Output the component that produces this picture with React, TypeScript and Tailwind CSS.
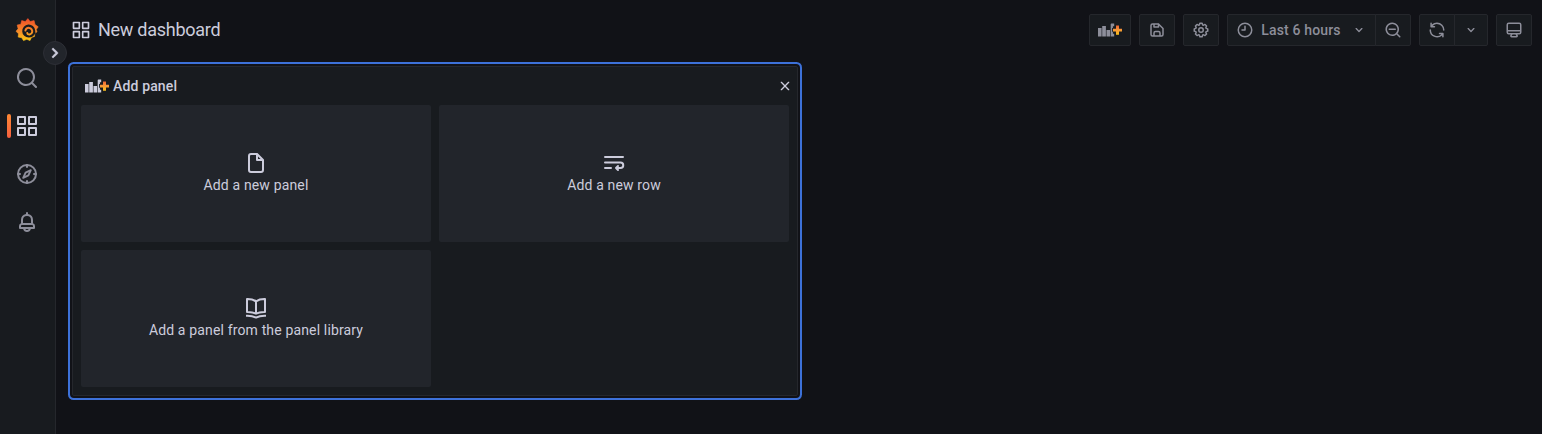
import type { ReactNode } from 'react';

const paths = {
  apps: 'M10,13H3a1,1,0,0,0-1,1v7a1,1,0,0,0,1,1h7a1,1,0,0,0,1-1V14A1,1,0,0,0,10,13ZM9,20H4V15H9ZM21,2H14a1,1,0,0,0-1,1v7a1,1,0,0,0,1,1h7a1,1,0,0,0,1-1V3A1,1,0,0,0,21,2ZM20,9H15V4h5Zm1,4H14a1,1,0,0,0-1,1v7a1,1,0,0,0,1,1h7a1,1,0,0,0,1-1V14A1,1,0,0,0,21,13Zm-1,7H15V15h5ZM10,2H3A1,1,0,0,0,2,3v7a1,1,0,0,0,1,1h7a1,1,0,0,0,1-1V3A1,1,0,0,0,10,2ZM9,9H4V4H9Z',
  search: 'M21.71,20.29,18,16.61A9,9,0,1,0,16.61,18l3.68,3.68a1,1,0,0,0,1.42,0A1,1,0,0,0,21.71,20.29ZM11,18a7,7,0,1,1,7-7A7,7,0,0,1,11,18Z',
  searchMinus: 'M21.71,20.29,18,16.61A9,9,0,1,0,16.61,18l3.68,3.68a1,1,0,0,0,1.42,0A1,1,0,0,0,21.71,20.29ZM11,18a7,7,0,1,1,7-7A7,7,0,0,1,11,18ZM15,10H7a1,1,0,0,0,0,2h8a1,1,0,0,0,0-2Z',
  bell: 'M18,13.18V10a6,6,0,0,0-5-5.91V3a1,1,0,0,0-2,0V4.09A6,6,0,0,0,6,10v3.18A3,3,0,0,0,4,16v2a1,1,0,0,0,1,1H8.14a4,4,0,0,0,7.72,0H19a1,1,0,0,0,1-1V16A3,3,0,0,0,18,13.18ZM8,10a4,4,0,0,1,8,0v3H8Zm4,10a2,2,0,0,1-1.72-1h3.44A2,2,0,0,1,12,20Zm6-3H6V16a1,1,0,0,1,1-1H17a1,1,0,0,1,1,1Z',
  save: 'M20.71,9.29l-6-6a1,1,0,0,0-.32-.21A1.09,1.09,0,0,0,14,3H6A3,3,0,0,0,3,6V18a3,3,0,0,0,3,3H18a3,3,0,0,0,3-3V10A1,1,0,0,0,20.71,9.29ZM9,5h4V7H9Zm6,14H9V16a1,1,0,0,1,1-1h4a1,1,0,0,1,1,1Zm4-1a1,1,0,0,1-1,1H17V16a3,3,0,0,0-3-3H10a3,3,0,0,0-3,3v3H6a1,1,0,0,1-1-1V6A1,1,0,0,1,6,5H7V8A1,1,0,0,0,8,9h6a1,1,0,0,0,1-1V6.41l4,4Z',
  cog: 'M21.32,9.55l-1.89-.63.89-1.78A1,1,0,0,0,20.13,6L18,3.87a1,1,0,0,0-1.15-.19l-1.78.89-.63-1.89A1,1,0,0,0,13.5,2h-3a1,1,0,0,0-.95.68L8.92,4.57,7.14,3.68A1,1,0,0,0,6,3.87L3.87,6a1,1,0,0,0-.19,1.15l.89,1.78-1.89.63A1,1,0,0,0,2,10.5v3a1,1,0,0,0,.68.95l1.89.63-.89,1.78A1,1,0,0,0,3.87,18L6,20.13a1,1,0,0,0,1.15.19l1.78-.89.63,1.89a1,1,0,0,0,.95.68h3a1,1,0,0,0,.95-.68l.63-1.89,1.78.89A1,1,0,0,0,18,20.13L20.13,18a1,1,0,0,0,.19-1.15l-.89-1.78,1.89-.63A1,1,0,0,0,22,13.5v-3A1,1,0,0,0,21.32,9.55ZM20,12.78l-1.2.4A2,2,0,0,0,17.64,16l.57,1.14-1.1,1.1L16,17.64a2,2,0,0,0-2.79,1.16l-.4,1.2H11.22l-.4-1.2A2,2,0,0,0,8,17.64l-1.14.57-1.1-1.1L6.36,16A2,2,0,0,0,5.2,13.18L4,12.78V11.22l1.2-.4A2,2,0,0,0,6.36,8L5.79,6.89l1.1-1.1L8,6.36A2,2,0,0,0,10.82,5.2l.4-1.2h1.56l.4,1.2A2,2,0,0,0,16,6.36l1.14-.57,1.1,1.1L17.64,8a2,2,0,0,0,1.16,2.79l1.2.4ZM12,8a4,4,0,1,0,4,4A4,4,0,0,0,12,8Zm0,6a2,2,0,1,1,2-2A2,2,0,0,1,12,14Z',
  clock: 'M12,6a1,1,0,0,0-1,1v4H8a1,1,0,0,0,0,2h4a1,1,0,0,0,1-1V7A1,1,0,0,0,12,6Zm0-4A10,10,0,1,0,22,12,10,10,0,0,0,12,2Zm0,18a8,8,0,1,1,8-8A8,8,0,0,1,12,20Z',
  angleDown: 'M17,9.17a1,1,0,0,0-1.41,0L12,12.71,8.46,9.17a1,1,0,0,0-1.41,0,1,1,0,0,0,0,1.42l4.24,4.24a1,1,0,0,0,1.42,0L17,10.59A1,1,0,0,0,17,9.17Z',
  sync: 'M19.91,15.51H15.38a1,1,0,0,0,0,2h2.4A8,8,0,0,1,4,12a1,1,0,0,0-2,0,10,10,0,0,0,16.88,7.23V21a1,1,0,0,0,2,0V16.5A1,1,0,0,0,19.91,15.51ZM12,2A10,10,0,0,0,5.12,4.77V3a1,1,0,0,0-2,0V7.5a1,1,0,0,0,1,1h4.5a1,1,0,0,0,0-2H6.22A8,8,0,0,1,20,12a1,1,0,0,0,2,0A10,10,0,0,0,12,2Z',
  monitor: 'M19,2H5A3,3,0,0,0,2,5V15a3,3,0,0,0,3,3H7.64l-.58,1a2,2,0,0,0,0,2,2,2,0,0,0,1.75,1h6.46A2,2,0,0,0,17,21a2,2,0,0,0,0-2l-.59-1H19a3,3,0,0,0,3-3V5A3,3,0,0,0,19,2ZM8.77,20,10,18H14l1.2,2ZM20,15a1,1,0,0,1-1,1H5a1,1,0,0,1-1-1V14H20Zm0-3H4V5A1,1,0,0,1,5,4H19a1,1,0,0,1,1,1Z',
  file: 'M20,8.94a1.31,1.31,0,0,0-.06-.27l0-.09a1.07,1.07,0,0,0-.19-.28h0l-6-6h0a1.07,1.07,0,0,0-.28-.19.32.32,0,0,0-.09,0A.88.88,0,0,0,13.05,2H7A3,3,0,0,0,4,5V19a3,3,0,0,0,3,3H17a3,3,0,0,0,3-3V9S20,9,20,8.94ZM14,5.41,16.59,8H14ZM18,19a1,1,0,0,1-1,1H7a1,1,0,0,1-1-1V5A1,1,0,0,1,7,4h5V9a1,1,0,0,0,1,1h5Z',
};

function Icon({ name, className }: { name: keyof typeof paths; className: string }) {
  return (
    <svg viewBox="0 0 24 24" fill="currentColor" className={`shrink-0 ${className}`}>
      <path d={paths[name]} />
    </svg>
  );
}

function LineIcon({ className, children }: { className: string; children: ReactNode }) {
  return (
    <svg
      viewBox="0 0 24 24"
      fill="none"
      stroke="currentColor"
      strokeWidth="2"
      strokeLinecap="round"
      strokeLinejoin="round"
      className={`shrink-0 ${className}`}
    >
      {children}
    </svg>
  );
}

function GrafanaLogo() {
  return (
    <svg viewBox="0 0 24 24" className="size-6 shrink-0">
      <defs>
        <linearGradient id="brand" gradientUnits="userSpaceOnUse" x1="12" y1="24" x2="12" y2="1">
          <stop offset="0" stopColor="#fcd00f" />
          <stop offset="0.45" stopColor="#f68c28" />
          <stop offset="1" stopColor="#ef4e2a" />
        </linearGradient>
      </defs>
      <path
        fill="url(#brand)"
        stroke="url(#brand)"
        strokeWidth="0.6"
        strokeLinejoin="round"
        d="M12.900.6l2.200 2.900 4-.9.900 4 3.200 2.200-1.900 2.700.7 2.400-2.200 1.200-.3 3.400-3 .9-1.500 3.200-3.200-1.300-3.300 1.300-1.800-2.900-3.500-.6.300-3.400L1 13.300l2.100-2.600L2.200 7l3.600-.7.900-3.700 3.600 1z"
      />
      <path fill="#181b1f" d="M20.200 12.400a6.500 6.500 0 1 0-6.400 7.200c3 0 5.200-1.600 6.600-4.600z" />
      <path
        fill="none"
        stroke="url(#brand)"
        strokeWidth="2"
        strokeLinecap="round"
        d="M10.400 12.600c.3-1.900 2-3 3.800-2.700 2 .3 3.400 2.200 3 4.100-.3 1.400-1.300 2.300-2.600 2.600M14.600 16.500c-1.200.2-2.200-.4-2.300-1.500"
      />
    </svg>
  );
}

function PanelAddIcon({ id }: { id: string }) {
  return (
    <svg viewBox="0 0 24 14" className="h-3.5 w-6 shrink-0">
      <defs>
        <linearGradient id={id} x1="0" y1="1" x2="0" y2="0">
          <stop offset="0" stopColor="#fbc01a" />
          <stop offset="0.6" stopColor="#f7923a" />
          <stop offset="1" stopColor="#f0632f" />
        </linearGradient>
      </defs>
      <path
        fill="currentColor"
        d="M0 5h3.600v8.500H0zM4.200 3h3.700v10.500H4.200zM8.500 7h3.600v6.500H8.500zM12.700 1.300q0-.7.7-.7h2.800v2.600h-1.300v1.900h-.8v3.600h.8v2.100h1.300v2.700h-3.500z"
      />
      <path fill={`url(#${id})`} d="M18 2.600h3v3.100h3v2.900h-3v3.200h-3V8.600h-3V5.700h3z" />
    </svg>
  );
}

function Sidebar() {
  return (
    <nav className="relative flex w-14 shrink-0 flex-col border-r border-[#25272c] bg-[#181b1f] text-[#8d8e9a]">
      <div className="flex h-[54px] items-center pt-1.5 pl-[15px]">
        <GrafanaLogo />
      </div>
      <div className="flex h-12 items-center pl-[15px]">
        <Icon name="search" className="size-6" />
      </div>
      <div className="flex h-12 items-center gap-1 pl-[7px] text-[#ccccdc]">
        <span className="h-6 w-1 rounded-[2px] bg-linear-to-b from-[#ff8833] to-[#f55f3e]" />
        <Icon name="apps" className="size-6" />
      </div>
      <div className="flex h-12 items-center pl-[15px]">
        <LineIcon className="size-6">
          <circle cx="12" cy="12" r="9" />
          <path d="M12 3v2M12 19v2M3 12h2M19 12h2" />
          <path d="M15.8 8.200 13.400 13.400 8.200 15.800 10.600 10.600z" strokeWidth="1.9" />
        </LineIcon>
      </div>
      <div className="flex h-12 items-center pl-[15px]">
        <Icon name="bell" className="size-6" />
      </div>
      <button className="absolute top-[41px] left-[43px] flex size-6 items-center justify-center rounded-full border border-[#2d2f36] bg-[#22252b] text-[#ccccdc]">
        <Icon name="angleDown" className="size-[22px] -rotate-90 stroke-current stroke-[0.6]" />
      </button>
    </nav>
  );
}

const button = 'flex h-8 items-center justify-center border border-[#25272c] bg-[#181b1f]';

function Toolbar() {
  return (
    <header className="flex h-[60px] items-center pr-[10px] pl-[15px] text-[#8d8e9a]">
      <Icon name="apps" className="size-5 text-[#ccccdc]" />
      <h1 className="ml-[7px] flex-1 pb-0.5 text-[18px] tracking-[-0.26px] text-[#ccccdc]">New dashboard</h1>
      <div className="flex gap-2">
        <button className={`${button} w-[42px] rounded-[2px]`}>
          <PanelAddIcon id="plus-toolbar" />
        </button>
        <button className={`${button} w-9 rounded-[2px]`}>
          <Icon name="save" className="size-[18px]" />
        </button>
        <button className={`${button} w-9 rounded-[2px]`}>
          <Icon name="cog" className="size-[18px]" />
        </button>
        <div className="flex">
          <button className={`${button} w-[149px] rounded-l-[2px] text-sm font-medium tracking-[0.15px]`}>
            <Icon name="clock" className="size-[18px]" />
            <span className="ml-[7px]">Last 6 hours</span>
            <Icon name="angleDown" className="ml-2.5 size-4" />
          </button>
          <button className={`${button} -ml-px w-9 rounded-r-[2px]`}>
            <Icon name="searchMinus" className="size-[18px]" />
          </button>
        </div>
        <div className="flex">
          <button className={`${button} w-9 rounded-l-[2px]`}>
            <Icon name="sync" className="size-[18px]" />
          </button>
          <button className={`${button} -ml-px w-[34px] rounded-r-[2px]`}>
            <Icon name="angleDown" className="size-4" />
          </button>
        </div>
        <button className={`${button} w-9 rounded-[2px]`}>
          <Icon name="monitor" className="size-[18px]" />
        </button>
      </div>
    </header>
  );
}

function Card({ icon, label }: { icon: ReactNode; label: string }) {
  return (
    <button className="flex h-[137px] flex-col items-center justify-center rounded-[2px] bg-[#22252b] text-sm leading-5 tracking-[0.15px]">
      {icon}
      <span className="pb-0.5">{label}</span>
    </button>
  );
}

function AddPanel() {
  return (
    <section className="mt-1.5 ml-4 h-[330px] w-[726px] rounded-[2px] border border-[#25272c] bg-[#181b1f] px-2 text-[#ccccdc] shadow-[0_0_0_2px_#111217,0_0_0_4px_#3d71d9]">
      <div className="flex h-[38px] items-center pl-1">
        <PanelAddIcon id="plus-panel" />
        <h2 className="ml-1 flex-1 text-sm font-medium tracking-[0.15px]">Add panel</h2>
        <LineIcon className="-mr-1 size-4">
          <path d="M6.500 6.500l11 11M17.500 6.500l-11 11" />
        </LineIcon>
      </div>
      <div className="grid grid-cols-[350px_350px] gap-2">
        <Card label="Add a new panel" icon={<Icon name="file" className="size-6" />} />
        <Card
          label="Add a new row"
          icon={
            <LineIcon className="size-6">
              <path d="M3 6h18M3 11.500h15.500a2.700 2.700 0 0 1 0 5.500H14M3 17h6M16 15l-2 2 2 2" />
            </LineIcon>
          }
        />
        <Card
          label="Add a panel from the panel library"
          icon={
            <LineIcon className="size-6">
              <path
                strokeLinecap="butt"
                d="M12 5.300C9.500 3.600 6.500 2.900 3 3v13c3.500-.1 6.500.3 9 1.700 2.500-1.400 5.500-1.800 9-1.700V3c-3.500-.1-6.500.6-9 2.300zM12 5.300v12.400M2 19.700c4-.2 7 .2 10 1.900 3-1.700 6-2.100 10-1.900"
              />
            </LineIcon>
          }
        />
      </div>
    </section>
  );
}

export default function App() {
  return (
    <div className="flex h-[434px] w-full overflow-hidden bg-[#111217] font-[Roboto,sans-serif]">
      <Sidebar />
      <main className="min-w-0 flex-1">
        <Toolbar />
        <AddPanel />
      </main>
    </div>
  );
}
